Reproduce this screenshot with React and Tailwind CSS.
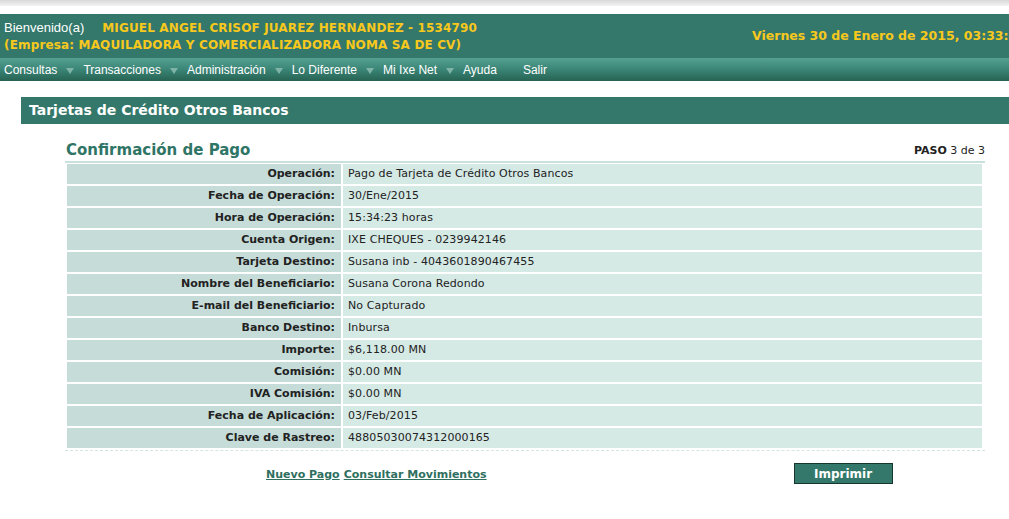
import React from 'react'

const rows = [
  ['Operación:', 'Pago de Tarjeta de Crédito Otros Bancos'],
  ['Fecha de Operación:', '30/Ene/2015'],
  ['Hora de Operación:', '15:34:23 horas'],
  ['Cuenta Origen:', 'IXE CHEQUES - 0239942146'],
  ['Tarjeta Destino:', 'Susana inb - 4043601890467455'],
  ['Nombre del Beneficiario:', 'Susana Corona Redondo'],
  ['E-mail del Beneficiario:', 'No Capturado'],
  ['Banco Destino:', 'Inbursa'],
  ['Importe:', '$6,118.00 MN'],
  ['Comisión:', '$0.00 MN'],
  ['IVA Comisión:', '$0.00 MN'],
  ['Fecha de Aplicación:', '03/Feb/2015'],
  ['Clave de Rastreo:', '48805030074312000165'],
]

const menu = ['Consultas', 'Transacciones', 'Administración', 'Lo Diferente', 'Mi Ixe Net', 'Ayuda']

const Arrow = () => (
  <svg width="8" height="6" viewBox="0 0 8 6" className="mx-[9px] mt-[2px]">
    <polygon points="0,0 8,0 4,6" fill="#7fb3a7" />
  </svg>
)

const App = () => {
  return (
    <div className="w-[1009px] h-[519px] overflow-hidden bg-white" style={{ fontFamily: '"DejaVu Sans", Verdana, sans-serif' }}>
      {/* top strip */}
      <div className="h-[6px] bg-gradient-to-b from-[#d8d8d8] to-[#f4f4f4]" />
      <div className="h-[8px]" />

      {/* header */}
      <div className="h-[44px] bg-[#33786a] flex items-center justify-between whitespace-nowrap overflow-hidden">
        <div className="pl-[4px] flex flex-col">
          <div className="flex items-center h-[17px]">
            <span className="text-white text-[13px]" style={{ fontFamily: '"Liberation Sans", Arial, sans-serif' }}>Bienvenido(a)</span>
            <span className="ml-[18px] text-[#f8c81c] text-[12px] font-bold tracking-[0.15px]">MIGUEL ANGEL CRISOF JUAREZ HERNANDEZ - 1534790</span>
          </div>
          <div className="text-[#f8c81c] text-[12px] font-bold h-[16px] leading-[16px] tracking-[0.15px]">(Empresa: MAQUILADORA Y COMERCIALIZADORA NOMA SA DE CV)</div>
        </div>
        <div className="shrink-0 w-[257px]">
          <div className="text-[#f8c81c] text-[12.5px] font-bold">Viernes 30 de Enero de 2015, 03:33:47</div>
        </div>
      </div>

      {/* menu bar */}
      <div className="h-[23px] bg-gradient-to-b from-[#55a191] via-[#3a8576] to-[#276353] flex items-center pl-[4px] text-white text-[12px]" style={{ fontFamily: '"Liberation Sans", Arial, sans-serif' }}>
        {menu.map((m, i) => (
          <div key={m} className="flex items-center">
            <span>{m}</span>
            {i < menu.length - 1 && <Arrow />}
          </div>
        ))}
        <span className="ml-[26px]">Salir</span>
      </div>

      <div className="h-[16px]" />

      {/* section title */}
      <div className="ml-[21px] h-[27px] bg-[#33786a] flex items-center pl-[8px] text-white font-bold text-[14px]">
        Tarjetas de Crédito Otros Bancos
      </div>

      {/* content */}
      <div className="ml-[65px] w-[920px] mt-[17px]">
        <div className="flex items-end justify-between h-[22px] border-b-2 border-[#c9e0dc] pb-[1px]">
          <div className="text-[#2f7566] font-bold text-[15px] pl-[1px] leading-[20px]">Confirmación de Pago</div>
          <div className="text-[11px] text-[#222] leading-[18px]"><span className="font-bold">PASO</span> 3 de 3</div>
        </div>
        <div className="pl-[2px] pr-[3px] pt-[1px] flex flex-col gap-[2px] text-[11px]">
          {rows.map(([label, value]) => (
            <div key={label} className="flex gap-[2px] h-[20px]">
              <div className="w-[274px] bg-[#c5dcd8] text-right pr-[6px] font-bold text-[#222] leading-[20px]">{label}</div>
              <div className="flex-1 bg-[#d5e9e5] pl-[5px] text-[#222] leading-[20px] tracking-[0.1px]">{value}</div>
            </div>
          ))}
        </div>
        <div className="mt-[2px] border-t border-dashed border-[#d3e6e2]" />

        <div className="flex items-center mt-[12px]">
          <div className="ml-[201px] flex gap-[4px] text-[11px] font-bold text-[#2f6f60]">
            <a href="#" className="underline">Nuevo Pago</a>
            <a href="#" className="underline">Consultar Movimientos</a>
          </div>
          <button className="ml-[307px] mb-[3px] w-[99px] h-[21px] bg-[#33786a] border border-[#16362e] text-white font-bold text-[12px]">
            Imprimir
          </button>
        </div>
      </div>
    </div>
  )
}

export default App
